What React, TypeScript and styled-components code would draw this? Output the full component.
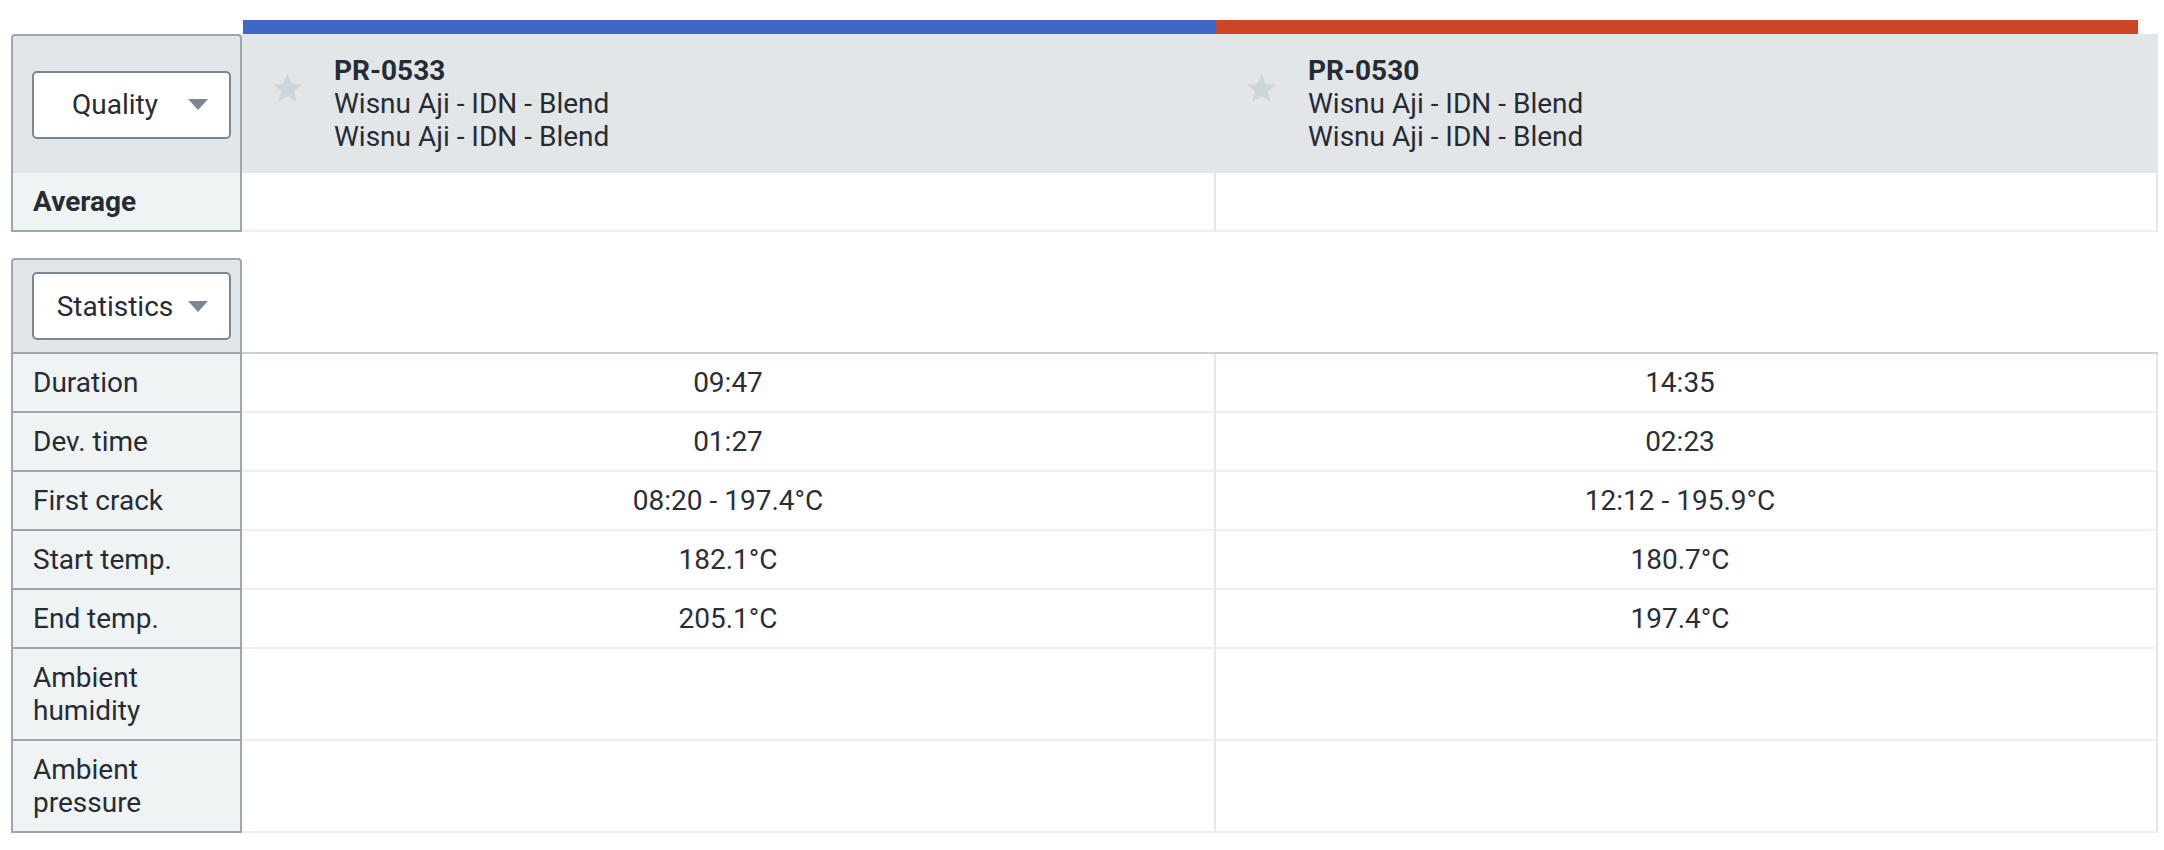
import React from 'react';
import styled, { createGlobalStyle, css } from 'styled-components';

const GlobalStyle = createGlobalStyle`
  body {
    margin: 0;
    background: #fff;
    font-family: Roboto, 'Liberation Sans', sans-serif;
    color: #272c34;
  }
`;

const PANEL_BORDER = '#9ba6b2';
const HEAD_BG = '#e2e6e9';
const LABEL_BG = '#eff3f4';
const LINE = '#edf1f2';
const DIVIDER = '#e4e8ea';

const Page = styled.div`
  padding: 20px 0 0 11px;
`;

const Grid = styled.div`
  display: grid;
  grid-template-columns: 231px 974px 942px;
  font-size: 28px;
  line-height: 33px;
`;

const BarSlot = styled.div``;

const Bar = styled.div<{ color: string; last?: boolean }>`
  height: 14px;
  background: ${({ color }) => color};
  margin-left: 1px;

  ${({ last }) =>
    last &&
    css`
      margin-left: 0;
      margin-right: 20px;
    `}
`;

const SideHead = styled.div<{ divided?: boolean; tall?: boolean }>`
  box-sizing: border-box;
  height: ${({ tall }) => (tall ? '139px' : '96px')};
  display: flex;
  align-items: center;
  padding-left: 19px;
  background: ${HEAD_BG};
  border: 2px solid ${PANEL_BORDER};
  border-bottom: none;
  border-radius: 4px 4px 0 0;

  ${({ divided }) =>
    divided &&
    css`
      border-bottom: 2px solid ${PANEL_BORDER};
    `}
`;

const Select = styled.button`
  box-sizing: border-box;
  width: 199px;
  height: 68px;
  display: flex;
  align-items: center;
  padding: 0 21px 0 12px;
  background: #fff;
  border: 2px solid #7b8794;
  border-radius: 5px;
  font: inherit;
  color: inherit;
`;

const SelectText = styled.span`
  flex: 1;
  text-align: center;
`;

const Caret = styled.svg`
  flex: none;
  width: 20px;
  height: 11px;
  margin-left: 4px;
`;

const HeadCell = styled.div`
  display: flex;
  align-items: center;
  padding-left: 31px;
  background: ${HEAD_BG};
`;

const Profile = styled.div`
  display: flex;
  align-items: flex-start;
  gap: 32px;
`;

const Star = styled.svg`
  flex: none;
  width: 29px;
  height: 28px;
  margin-top: 20px;
`;

const ProfileId = styled.div`
  font-weight: 700;
`;

const Label = styled.div<{ bold?: boolean }>`
  padding: 12px 20px;
  background: ${LABEL_BG};
  border-left: 2px solid ${PANEL_BORDER};
  border-right: 2px solid ${PANEL_BORDER};
  border-bottom: 2px solid ${PANEL_BORDER};
  font-weight: ${({ bold }) => (bold ? 700 : 400)};
`;

const Value = styled.div<{ last?: boolean }>`
  padding: 12px;
  text-align: center;
  border-bottom: 2px solid ${LINE};
  border-right: 2px solid ${DIVIDER};
  color: #2a2f37;

  ${({ last }) =>
    last &&
    css`
      padding-right: 24px;
    `}
`;

const Gap = styled.div`
  grid-column: 1 / -1;
  height: 26px;
`;

const BlankHead = styled.div`
  grid-column: span 2;
  border-bottom: 2px solid #c8d2d5;
`;

interface ProfileData {
  id: string;
  lines: string[];
}

const profiles: ProfileData[] = [
  { id: 'PR-0533', lines: ['Wisnu Aji - IDN - Blend', 'Wisnu Aji - IDN - Blend'] },
  { id: 'PR-0530', lines: ['Wisnu Aji - IDN - Blend', 'Wisnu Aji - IDN - Blend'] },
];

const stats: { label: string[]; values: string[] }[] = [
  { label: ['Duration'], values: ['09:47', '14:35'] },
  { label: ['Dev. time'], values: ['01:27', '02:23'] },
  { label: ['First crack'], values: ['08:20 - 197.4°C', '12:12 - 195.9°C'] },
  { label: ['Start temp.'], values: ['182.1°C', '180.7°C'] },
  { label: ['End temp.'], values: ['205.1°C', '197.4°C'] },
  { label: ['Ambient', 'humidity'], values: ['', ''] },
  { label: ['Ambient', 'pressure'], values: ['', ''] },
];

const Dropdown: React.FC<{ label: string }> = ({ label }) => (
  <Select>
    <SelectText>{label}</SelectText>
    <Caret viewBox='0 0 20 11'>
      <polygon points='0,0 20,0 10,11' fill='#7b8893' />
    </Caret>
  </Select>
);

const StarIcon = () => (
  <Star viewBox='2 2 20 19.3'>
    <path
      d='M12 17.27L18.18 21l-1.64-7.03L22 9.24l-7.19-.61L12 2 9.19 8.63 2 9.24l5.46 4.73L5.82 21z'
      fill='#cdd7db'
    />
  </Star>
);

const App: React.FC = () => {
  return (
    <Page>
      <GlobalStyle />
      <Grid>
        <BarSlot />
        <Bar color='#3e67c7' />
        <Bar color='#cd4527' last />

        <SideHead tall>
          <Dropdown label='Quality' />
        </SideHead>
        {profiles.map((p) => (
          <HeadCell key={p.id}>
            <Profile>
              <StarIcon />
              <div>
                <ProfileId>{p.id}</ProfileId>
                {p.lines.map((line, i) => (
                  <div key={i}>{line}</div>
                ))}
              </div>
            </Profile>
          </HeadCell>
        ))}

        <Label bold>Average</Label>
        <Value>&nbsp;</Value>
        <Value last>&nbsp;</Value>

        <Gap />

        <SideHead divided>
          <Dropdown label='Statistics' />
        </SideHead>
        <BlankHead />

        {stats.map((row) => (
          <React.Fragment key={row.label.join(' ')}>
            <Label>
              {row.label.map((part) => (
                <div key={part}>{part}</div>
              ))}
            </Label>
            <Value>{row.values[0]}</Value>
            <Value last>{row.values[1]}</Value>
          </React.Fragment>
        ))}
      </Grid>
    </Page>
  );
};

export default App;
